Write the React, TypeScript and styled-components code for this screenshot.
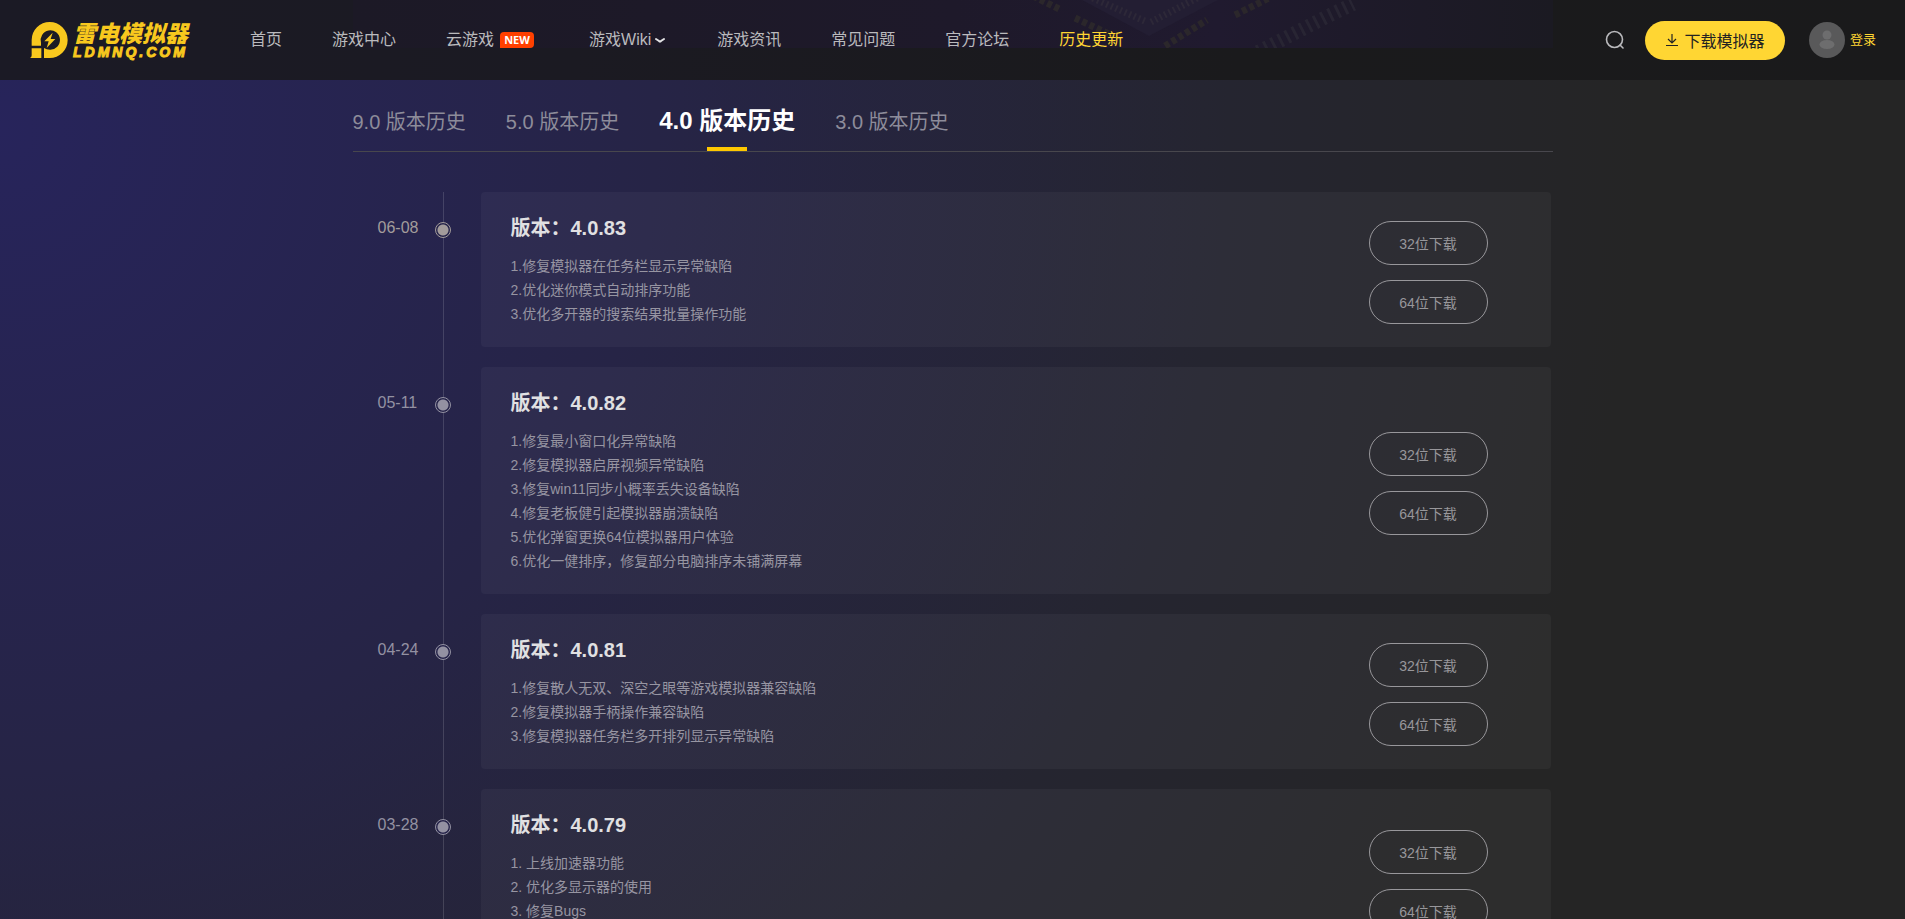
import React from 'react';
import styled, { createGlobalStyle } from 'styled-components';

const GlobalStyle = createGlobalStyle`
  * { box-sizing: border-box; }
  html { scrollbar-width: none; background: #252525; }
  body {
    margin: 0;
    font-family: "Liberation Sans", "Noto Sans CJK SC", sans-serif;
    color: #fff;
  }
  a { color: inherit; text-decoration: none; }
  h2, ul, ol, p { margin: 0; padding: 0; }
  ul, ol { list-style: none; }
  button { font: inherit; cursor: pointer; }
`;

const Page = styled.div`
  min-height: 100vh;
  background:
    radial-gradient(ellipse 1640px 1600px at 0 130px, #27245b 0%, #262446 40%, #252530 75%, #252525 100%) fixed,
    #252525;
`;

const Header = styled.header`
  position: sticky;
  top: 0;
  z-index: 2;
  height: 80px;
  padding: 0 29px 0 30px;
  display: flex;
  align-items: center;
  overflow: hidden;
  background: linear-gradient(90deg, #1b1a25 0%, #1b1a22 30%, #1a1a1c 65%, #1a1a1b 100%);
`;

const Banner = styled.svg`
  position: absolute;
  top: 0;
  left: 50%;
  margin-left: -600px;
  z-index: -1;
`;

const Logo = styled.a`
  display: flex;
  align-items: center;
  gap: 5px;
  width: 162px;
  margin-right: 58px;
  color: #f8c81e;
  font-weight: 900;
  font-style: italic;
  white-space: nowrap;
`;

const Wordmark = styled.span`
  display: flex;
  flex-direction: column;
`;

const BrandName = styled.span`
  font-size: 23px;
  line-height: 24px;
`;

const BrandDomain = styled.span`
  font-size: 14px;
  line-height: 12px;
  letter-spacing: 3px;
  -webkit-text-stroke: 1px #f8c81e;
`;

const Nav = styled.nav`
  display: flex;
  align-items: center;
  gap: 50px;
  flex: 1;
`;

const NavLink = styled.a<{ $active?: boolean }>`
  display: flex;
  align-items: center;
  font-size: 16px;
  line-height: 24px;
  white-space: nowrap;
  color: ${(p) => (p.$active ? '#ffd633' : '#bababd')};
`;

const NewBadge = styled.span`
  margin: 0 5px 0 6px;
  width: 34px;
  height: 16px;
  border-radius: 4px 4px 4px 0;
  background: #ff4000;
  color: #fff;
  font: 700 11px/16px "Open Sans", sans-serif;
  text-align: center;
`;

const Chevron = styled.svg`
  margin: 0 1px 0 3px;
`;

const Actions = styled.div`
  display: flex;
  align-items: center;
`;

const IconButton = styled.button`
  display: flex;
  padding: 0;
  border: 0;
  background: none;
  color: #bababd;
  margin-right: 20px;
`;

const DownloadButton = styled.button`
  display: flex;
  align-items: center;
  justify-content: center;
  gap: 5px;
  width: 140px;
  height: 39px;
  padding: 0;
  border: 0;
  border-radius: 20px;
  background: #ffd633;
  color: #222;
  font-size: 16px;
`;

const Login = styled.a`
  display: flex;
  align-items: center;
  gap: 5px;
  margin-left: 24px;
  font-size: 13px;
  color: #ffd633;
`;

const LoginLabel = styled.span`
  padding-bottom: 4px;
`;

const Main = styled.main`
  max-width: 1200px;
  margin: 0 auto;
`;

const Tabs = styled.div`
  display: flex;
  align-items: flex-end;
  gap: 40px;
  height: 72px;
  border-bottom: 1px solid #48474d;
`;

const Tab = styled.button<{ $active?: boolean }>`
  display: flex;
  flex-direction: column;
  align-items: center;
  justify-content: flex-end;
  padding: 0;
  border: 0;
  background: none;
  white-space: nowrap;
  color: ${(p) => (p.$active ? '#fff' : '#8d8c9a')};
  font-size: ${(p) => (p.$active ? 24 : 20)}px;
  font-weight: ${(p) => (p.$active ? 700 : 400)};
  line-height: ${(p) => (p.$active ? 24 : 22)}px;
  &::after {
    content: "";
    width: 40px;
    height: 4px;
    margin-top: 14px;
    background: ${(p) => (p.$active ? '#ffc800' : 'transparent')};
  }
`;

const Timeline = styled.ol`
  margin-top: 40px;
`;

const Entry = styled.li`
  display: flex;
  &:not(:last-child) { padding-bottom: 20px; }
  background: linear-gradient(rgba(255, 255, 255, 0.14), rgba(255, 255, 255, 0.14)) 90px 0 / 1px 100% no-repeat;
`;

const Stamp = styled.div<{ $latest?: boolean }>`
  display: flex;
  justify-content: space-between;
  flex: none;
  width: 98px;
  margin-right: 30px;
  padding: 24px 0 0 25px;
  font-size: 16px;
  line-height: 24px;
  color: ${(p) => (p.$latest ? '#a39c9b' : '#9391a2')};
`;

const Dot = styled.span`
  width: 16px;
  height: 16px;
  margin-top: 6px;
  border: 1px solid currentColor;
  border-radius: 50%;
  background: radial-gradient(circle, currentColor 5px, #26244a 6px);
`;

const Card = styled.article`
  display: flex;
  justify-content: space-between;
  align-items: center;
  flex: 1;
  margin-right: 2px;
  padding: 20px 63px 20px 30px;
  border-radius: 4px;
  background: rgba(255, 255, 255, 0.04);
`;

const Title = styled.h2`
  margin-bottom: 10px;
  font-size: 20px;
  line-height: 32px;
  color: #e0e0e2;
`;

const Notes = styled.ul`
  padding-bottom: 1px;
  font-size: 14px;
  line-height: 24px;
  color: #9795a2;
`;

const Downloads = styled.div`
  display: flex;
  flex-direction: column;
  gap: 15px;
  padding-top: 6px;
`;

const PillButton = styled.button`
  width: 119px;
  height: 44px;
  padding: 0;
  border: 1px solid #98979b;
  border-radius: 22px;
  background: none;
  color: #98979b;
  font-size: 14px;
`;

const releases = [
  { date: '06-08', version: '4.0.83', notes: ['1.修复模拟器在任务栏显示异常缺陷', '2.优化迷你模式自动排序功能', '3.优化多开器的搜索结果批量操作功能'] },
  {
    date: '05-11',
    version: '4.0.82',
    notes: [
      '1.修复最小窗口化异常缺陷',
      '2.修复模拟器启屏视频异常缺陷',
      '3.修复win11同步小概率丢失设备缺陷',
      '4.修复老板健引起模拟器崩溃缺陷',
      '5.优化弹窗更换64位模拟器用户体验',
      '6.优化一健排序，修复部分电脑排序未铺满屏幕',
    ],
  },
  { date: '04-24', version: '4.0.81', notes: ['1.修复散人无双、深空之眼等游戏模拟器兼容缺陷', '2.修复模拟器手柄操作兼容缺陷', '3.修复模拟器任务栏多开排列显示异常缺陷'] },
  { date: '03-28', version: '4.0.79', notes: ['1. 上线加速器功能', '2. 优化多显示器的使用', '3. 修复Bugs', '4. 优化性能'] },
];

const tabs = ['9.0 版本历史', '5.0 版本历史', '4.0 版本历史', '3.0 版本历史'];

const LogoMark = () => (
  <svg width="38" height="36" viewBox="0 0 114 108" fill="currentColor" aria-hidden="true">
    <path d="M5 71V54A54 54 0 0 1 113 54A54 54 0 0 1 59 108H42V78Q50 83 60 83A29 29 0 1 0 33 62V71Z" />
    <path d="M5 79H34V108H0Q5 106 5 100Z" />
    <path d="M68 32L43 58H56L50 78L76 51H62Z" />
  </svg>
);

const BannerArt = () => (
  <Banner width="1200" height="48" viewBox="0 0 1200 48" aria-hidden="true">
    <defs>
      <linearGradient id="glow" x1="0" x2="1" y1="0" y2="0">
        <stop offset="0" stopColor="#1c1926" />
        <stop offset="0.5" stopColor="#1e192a" />
        <stop offset="0.72" stopColor="#201a2f" />
        <stop offset="1" stopColor="#1b1a22" />
      </linearGradient>
    </defs>
    <rect width="1200" height="48" fill="url(#glow)" />
    <path d="M729 0L796 36L865 0Z" fill="#231e33" />
    <path d="M735 -4L794 22" fill="none" stroke="#2d2838" strokeWidth="7" strokeDasharray="2 3" />
    <path d="M798 22L850 -5" fill="none" stroke="#2d2838" strokeWidth="7" strokeDasharray="2 3" />
    <path d="M680 -4L708 10M722 18L760 36M812 46L854 20M882 15L922 -5" fill="none" stroke="#2b272b" strokeWidth="7" strokeDasharray="5 3" />
    <path d="M905 52L975 16L1000 4" fill="none" stroke="#282533" strokeWidth="14" strokeDasharray="3 5" />
  </Banner>
);

const App = () => (
  <>
    <GlobalStyle />
    <Page>
      <Header>
        <BannerArt />
        <Logo href="#">
          <LogoMark />
          <Wordmark>
            <BrandName>雷电模拟器</BrandName>
            <BrandDomain>LDMNQ.COM</BrandDomain>
          </Wordmark>
        </Logo>
        <Nav>
          <NavLink href="#">首页</NavLink>
          <NavLink href="#">游戏中心</NavLink>
          <NavLink href="#">云游戏<NewBadge>NEW</NewBadge></NavLink>
          <NavLink href="#">
            游戏Wiki
            <Chevron width="12" height="8" viewBox="0 0 12 8" fill="none" stroke="#e4e4e6" strokeWidth="2" strokeLinecap="round"><path d="M2 3L5 5Q6 6 7 5L10 3" /></Chevron>
          </NavLink>
          <NavLink href="#">游戏资讯</NavLink>
          <NavLink href="#">常见问题</NavLink>
          <NavLink href="#">官方论坛</NavLink>
          <NavLink href="#" $active>历史更新</NavLink>
        </Nav>
        <Actions>
          <IconButton aria-label="搜索">
            <svg width="20" height="20" viewBox="0 0 20 20" fill="none" stroke="currentColor" strokeWidth="1.6" strokeLinecap="round"><circle cx="9.5" cy="9.5" r="8" /><path d="M15 15L18 18" /></svg>
          </IconButton>
          <DownloadButton>
            <svg width="14" height="14" viewBox="0 0 14 14" fill="none" stroke="currentColor" strokeWidth="1.2"><path d="M7 1V9.500M3 6L7 10L11 6M1 12.500H13" /></svg>
            下载模拟器
          </DownloadButton>
          <Login href="#">
            <svg width="36" height="36" viewBox="0 0 36 36" aria-hidden="true"><circle cx="18" cy="18" r="18" fill="#59595a" /><circle cx="18" cy="13" r="4.500" fill="#6d6d6e" /><ellipse cx="18" cy="22.500" rx="7.500" ry="4.500" fill="#6d6d6e" /></svg>
            <LoginLabel>登录</LoginLabel>
          </Login>
        </Actions>
      </Header>
      <Main>
        <Tabs role="tablist">
          {tabs.map((t, i) => (
            <Tab key={t} role="tab" aria-selected={i === 2} $active={i === 2}>{t}</Tab>
          ))}
        </Tabs>
        <Timeline>
          {releases.map((r, i) => (
            <Entry key={r.version}>
              <Stamp $latest={i === 0}><time>{r.date}</time><Dot /></Stamp>
              <Card>
                <div>
                  <Title>版本：{r.version}</Title>
                  <Notes>{r.notes.map((n) => <li key={n}>{n}</li>)}</Notes>
                </div>
                <Downloads>
                  <PillButton>32位下载</PillButton>
                  <PillButton>64位下载</PillButton>
                </Downloads>
              </Card>
            </Entry>
          ))}
        </Timeline>
      </Main>
    </Page>
  </>
);

export default App;
